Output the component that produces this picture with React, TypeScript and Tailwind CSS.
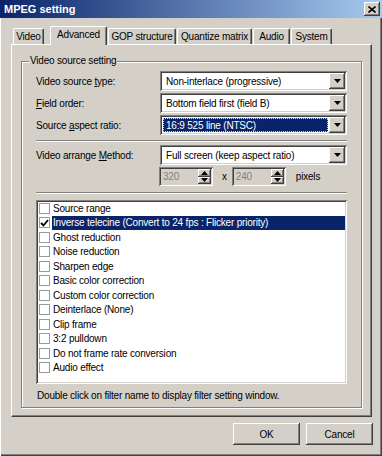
import React from "react";

const FONT = "font-['Liberation_Sans',Arial,sans-serif]";

const RAISED =
  "shadow-[inset_-1px_-1px_#404040,inset_1px_1px_#ffffff,inset_-2px_-2px_#808080]";
const SUNKEN =
  "shadow-[inset_1px_1px_#808080,inset_-1px_-1px_#ffffff,inset_2px_2px_#404040,inset_-2px_-2px_#d4d0c8]";

const TABS = [
  { label: "Video", w: "w-[31px]", ml: "ml-[2px]" },
  { label: "Advanced", w: "w-[57px]", ml: "ml-[6px]", active: true },
  { label: "GOP structure", w: "w-[68px]", ml: "ml-[1px]" },
  { label: "Quantize matrix", w: "w-[75px]", ml: "ml-[1px]" },
  { label: "Audio", w: "w-[37px]", ml: "ml-[1px]" },
  { label: "System", w: "w-[41px]", ml: "ml-[1px]" },
];

const FILTERS = [
  "Source range",
  "Inverse telecine (Convert to 24 fps : Flicker priority)",
  "Ghost reduction",
  "Noise reduction",
  "Sharpen edge",
  "Basic color correction",
  "Custom color correction",
  "Deinterlace (None)",
  "Clip frame",
  "3:2 pulldown",
  "Do not frame rate conversion",
  "Audio effect",
];

function DownArrow() {
  return (
    <svg width="7" height="4" viewBox="0 0 7 4">
      <path d="M0 0h7L3.5 4z" fill="#000" />
    </svg>
  );
}

function Combo({ value, focused }: { value: string; focused?: boolean }) {
  return (
    <div className={`w-[187px] h-[20px] bg-white flex p-[2px] ${SUNKEN}`}>
      <div className="flex-1 flex items-stretch p-[1px]">
        {focused ? (
          <div className="flex-1 flex items-center bg-[#0a246a] text-white pl-[2px] border border-dotted border-[#e0dca0]">
            {value}
          </div>
        ) : (
          <div className="flex-1 flex items-center pl-[3px]">{value}</div>
        )}
      </div>
      <div className={`w-[16px] bg-[#d4d0c8] flex items-center justify-center ${RAISED}`}>
        <DownArrow />
      </div>
    </div>
  );
}

function Spin({ value }: { value: string }) {
  return (
    <div className={`w-[54px] h-[19px] bg-[#d4d0c8] flex p-[2px] ${SUNKEN}`}>
      <div className="flex-1 flex items-center pl-[2px] text-[#808080]">{value}</div>
      <div className="w-[13px] flex flex-col">
        <div className={`flex-1 bg-[#d4d0c8] flex items-center justify-center ${RAISED}`}>
          <svg width="7" height="4" viewBox="0 0 7 4">
            <path d="M3.5 0L7 4H0z" fill="#000" />
          </svg>
        </div>
        <div className={`flex-1 bg-[#d4d0c8] flex items-center justify-center ${RAISED}`}>
          <DownArrow />
        </div>
      </div>
    </div>
  );
}

function Separator() {
  return <div className="h-[2px] border-t border-[#808080] border-b border-b-white" />;
}

function Row({ label, children }: { label: React.ReactNode; children: React.ReactNode }) {
  return (
    <div className="flex items-center justify-between">
      <span>{label}</span>
      {children}
    </div>
  );
}

export default function App() {
  return (
    <div className={`w-[382px] h-[456px] bg-[#d4d0c8] flex flex-col text-[10px] tracking-[-0.2px] text-black ${FONT}`}>
      {/* Title bar */}
      <div className="h-[18px] flex items-center justify-between pl-[4px] pr-[2px] bg-[linear-gradient(90deg,#0a246a,#a6caf0)]">
        <span className="text-white font-bold text-[11px] tracking-normal">MPEG setting</span>
        <div className={`w-[16px] h-[14px] bg-[#d4d0c8] flex items-center justify-center ${RAISED}`}>
          <svg width="8" height="7" viewBox="0 0 8 7">
            <path d="M0.5 0.5L7.5 6.5M7.5 0.5L0.5 6.5" stroke="#000" strokeWidth="1.6" />
          </svg>
        </div>
      </div>

      {/* Body */}
      <div className="flex-1 flex flex-col pl-[11px] pr-[10px] pt-[8px] shadow-[inset_1px_0_#ffffff,inset_-1px_-1px_#404040,inset_-2px_-2px_#808080]">
        {/* Tabs */}
        <div className="h-[18px] flex items-end">
          {TABS.map((t) => (
            <div
              key={t.label}
              className={`${t.ml} ${t.w} ${
                t.active ? "h-[19px] -mb-[1px] relative z-10 pb-[3px]" : "h-[16px]"
              } bg-[#d4d0c8] flex items-center justify-center rounded-t-[2px] border-t border-l border-white border-r border-r-[#404040] shadow-[inset_-1px_0_#808080] whitespace-nowrap`}
            >
              {t.label}
            </div>
          ))}
        </div>

        {/* Panel */}
        <div className="h-[373px] border-t border-l border-white border-r border-b border-r-[#404040] border-b-[#404040] shadow-[inset_-1px_-1px_#808080] pt-[16px] pl-[9px] pr-[9px]">
          <div className="relative h-[347px] border border-[#808080] shadow-[inset_1px_1px_#ffffff,1px_1px_#ffffff] pt-[9px] pl-[14px] pr-[14px] flex flex-col">
            <span className="absolute left-[7px] -top-[7px] bg-[#d4d0c8] px-[1px] leading-[12px]">
              Video source setting
            </span>

            <div className="flex flex-col gap-[2px]">
              <Row label={<>Video source <span className="underline">t</span>ype:</>}>
                <Combo value="Non-interlace (progressive)" />
              </Row>
              <Row label={<><span className="underline">F</span>ield order:</>}>
                <Combo value="Bottom field first (field B)" />
              </Row>
              <Row label={<>Source <span className="underline">a</span>spect ratio:</>}>
                <Combo value="16:9 525 line (NTSC)" focused />
              </Row>
            </div>

            <div className="mt-[5px]">
              <Separator />
            </div>

            <div className="mt-[3px]">
              <Row label={<>Video arrange <span className="underline">M</span>ethod:</>}>
                <Combo value="Full screen (keep aspect ratio)" />
              </Row>
            </div>

            <div className="mt-[2px] flex items-center pl-[123px]">
              <Spin value="320" />
              <span className="ml-[9px]">x</span>
              <span className="ml-[5px]">
                <Spin value="240" />
              </span>
              <span className="ml-[10px]">pixels</span>
            </div>

            <div className="mt-[6px]">
              <Separator />
            </div>

            <div className={`mt-[6px] h-[184px] bg-white px-[2px] pt-[1px] ${SUNKEN}`}>
              {FILTERS.map((f, i) => {
                const sel = i === 1;
                return (
                  <div key={f} className="h-[14.5px] flex items-center">
                    <div className="ml-[1px] w-[11px] h-[11px] border border-[#9a9a9a] bg-white flex items-center justify-center">
                      {sel && (
                        <svg width="9" height="8" viewBox="0 0 9 8">
                          <path d="M1 4l2.5 2.5L8 1" stroke="#000" strokeWidth="1.8" fill="none" />
                        </svg>
                      )}
                    </div>
                    <div
                      className={`ml-[2px] flex-1 h-full flex items-center pl-[1px] whitespace-nowrap ${
                        sel ? "bg-[#0a246a] text-white" : ""
                      }`}
                    >
                      {f}
                    </div>
                  </div>
                );
              })}
            </div>

            <div className="mt-[6px] leading-[12px] pl-[1px]">
              Double click on filter name to display filter setting window.
            </div>
          </div>
        </div>

        {/* Buttons */}
        <div className="mt-[6px] flex justify-end gap-[6px] -mr-[1px]">
          {["OK", "Cancel"].map((b) => (
            <div
              key={b}
              className={`w-[67px] h-[22px] bg-[#d4d0c8] flex items-center justify-center ${RAISED}`}
            >
              {b}
            </div>
          ))}
        </div>
      </div>
    </div>
  );
}
